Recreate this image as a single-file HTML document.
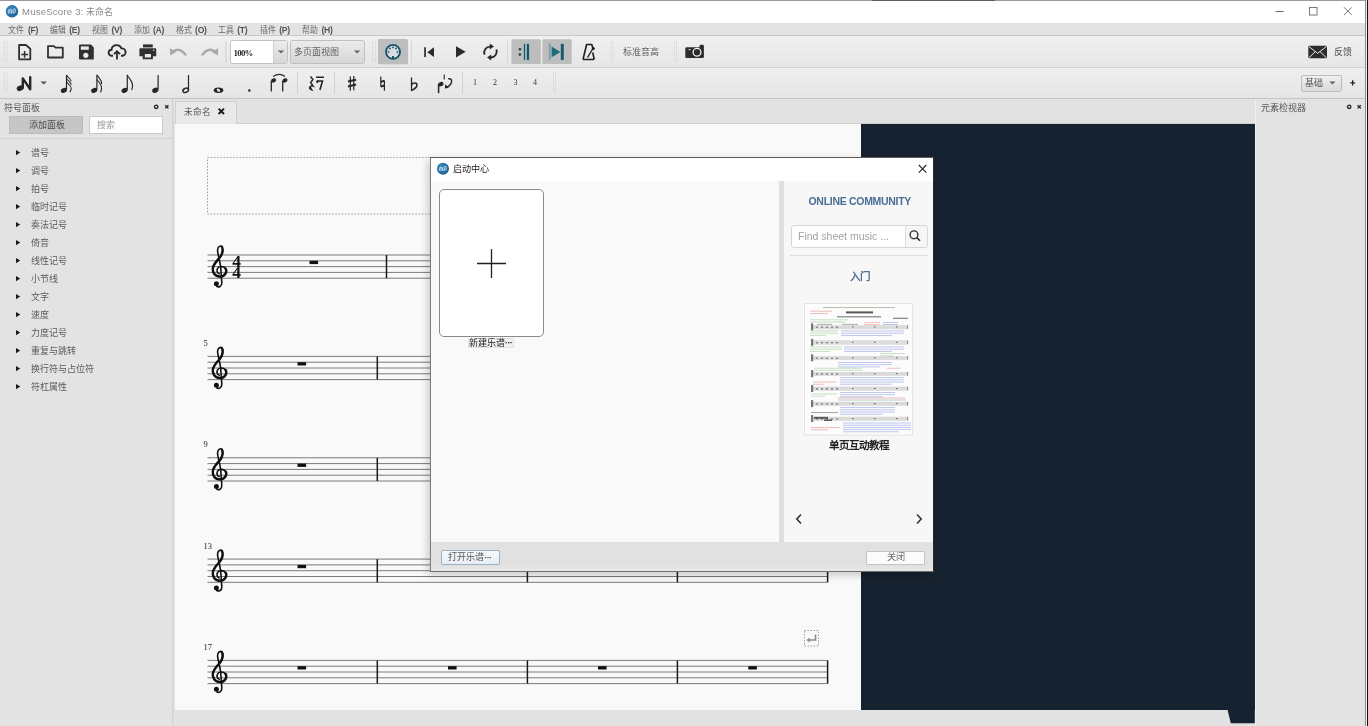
<!DOCTYPE html>
<html lang="zh-CN">
<head>
<meta charset="utf-8">
<style>
*{margin:0;padding:0;box-sizing:border-box}
html,body{width:1368px;height:726px;overflow:hidden;background:#e2e2e2;font-family:"Liberation Sans",sans-serif;}
.a{position:absolute}
.ser{font-family:"Liberation Serif",serif}
#title{left:0;top:0;width:1368px;height:23px;background:#fff;border-top:1px solid #9a9a9a}
#menu{left:0;top:23px;width:1368px;height:13px;background:#e3e3e3;border-bottom:1px solid #c9c9c9}
#tb1{left:0;top:36px;width:1368px;height:32px;background:linear-gradient(#f0f0f0,#e6e6e6);border-bottom:1px solid #cfcfcf}
#tb2{left:0;top:68px;width:1368px;height:31px;background:linear-gradient(#efefef,#e5e5e5);border-bottom:1px solid #c4c4c4}
#lpanel{left:0;top:99px;width:172px;height:627px;background:#e3e3e3}
#canvasL{left:172px;top:99px;width:3px;height:627px;background:linear-gradient(90deg,#cfcfcf,#dedede 60%,#e9e9e9)}
#tabbar{left:175px;top:99px;width:1080px;height:25px;background:#e2e2e2;border-bottom:1px solid #cfcfcf}
#page{left:175px;top:124px;width:686px;height:586px;background:#f9f9f9}
#dark{left:861px;top:124px;width:394px;height:586px;background:#16222f}
#rpanel{left:1255px;top:99px;width:110px;height:627px;background:#e3e3e3;border-left:1px solid #f0f0f0}
#redge{left:1365px;top:0;width:3px;height:726px;background:linear-gradient(90deg,#8c8c8c 0,#8c8c8c 1px,#f2f2f2 1px,#f2f2f2 2px,#111 2px)}
</style>
</head>
<body>
<div id="root" style="position:absolute;left:0;top:0;width:1368px;height:726px;overflow:hidden;will-change:transform">
<div id="title" class="a"></div>
<div id="menu" class="a"></div>
<div class="a" style="left:872px;top:0;width:123px;height:1px;background:#5a5f63"></div>
<div id="tb1" class="a"></div>
<div id="tb2" class="a"></div>
<div id="lpanel" class="a"></div>
<div id="canvasL" class="a"></div>
<div id="tabbar" class="a"></div>
<div id="page" class="a"></div>
<div id="dark" class="a"></div>
<svg class="a" style="left:0;top:0;will-change:transform" width="1368" height="726" viewBox="0 0 1368 726">
<rect x="207.5" y="157.5" width="620.5" height="56.5" fill="none" stroke="#a0a0a0" stroke-width="1" stroke-dasharray="1.6 1.6"/>
<path d="M207.5 255.0H827.6" stroke="#7a7a7a" stroke-width="1"/>
<path d="M207.5 260.8H827.6" stroke="#7a7a7a" stroke-width="1"/>
<path d="M207.5 266.6H827.6" stroke="#7a7a7a" stroke-width="1"/>
<path d="M207.5 272.4H827.6" stroke="#7a7a7a" stroke-width="1"/>
<path d="M207.5 278.2H827.6" stroke="#7a7a7a" stroke-width="1"/>
<g transform="translate(0 0.0)" fill="none" stroke="#111" stroke-linecap="round"><path d="M219.2 273.8C217 273.2 216.4 270.4 217.6 268.4C219 266 223.6 265.8 225.6 268.6C227.4 271.4 225.4 276.6 220 276.6C215 276.6 212.4 272.6 212.8 268.6C213.2 263.6 218.4 259.6 220.6 256.4C222.8 253.2 223.4 248.8 221.8 246.6C220.6 245.2 218 246.4 217.6 249.6C217.2 253 219.6 258 220.8 268L221.8 282.6C222 286.6 218.6 287.6 216.8 286.4" stroke-width="1.6"/><path d="M225.6 268.6C227.4 271.4 225.4 276.6 220 276.6C215 276.6 212.4 272.6 212.8 268.6C213.2 263.6 218.4 259.6 220.6 256.4C222.8 253.2 223.4 248.8 221.8 246.6" stroke-width="2.4"/><circle cx="216.4" cy="283.8" r="2.5" fill="#111" stroke="none"/></g>
<path d="M386.5 255.0V278.2" stroke="#1a1a1a" stroke-width="1.5"/>
<path d="M827.6 255.0V278.2" stroke="#1a1a1a" stroke-width="1.5"/>
<rect x="309.5" y="260.8" width="8.6" height="3.3" fill="#111"/>
<path d="M207.5 356.4H827.6" stroke="#7a7a7a" stroke-width="1"/>
<path d="M207.5 362.2H827.6" stroke="#7a7a7a" stroke-width="1"/>
<path d="M207.5 368.0H827.6" stroke="#7a7a7a" stroke-width="1"/>
<path d="M207.5 373.8H827.6" stroke="#7a7a7a" stroke-width="1"/>
<path d="M207.5 379.6H827.6" stroke="#7a7a7a" stroke-width="1"/>
<g transform="translate(0 101.4)" fill="none" stroke="#111" stroke-linecap="round"><path d="M219.2 273.8C217 273.2 216.4 270.4 217.6 268.4C219 266 223.6 265.8 225.6 268.6C227.4 271.4 225.4 276.6 220 276.6C215 276.6 212.4 272.6 212.8 268.6C213.2 263.6 218.4 259.6 220.6 256.4C222.8 253.2 223.4 248.8 221.8 246.6C220.6 245.2 218 246.4 217.6 249.6C217.2 253 219.6 258 220.8 268L221.8 282.6C222 286.6 218.6 287.6 216.8 286.4" stroke-width="1.6"/><path d="M225.6 268.6C227.4 271.4 225.4 276.6 220 276.6C215 276.6 212.4 272.6 212.8 268.6C213.2 263.6 218.4 259.6 220.6 256.4C222.8 253.2 223.4 248.8 221.8 246.6" stroke-width="2.4"/><circle cx="216.4" cy="283.8" r="2.5" fill="#111" stroke="none"/></g>
<path d="M377.3 356.4V379.6" stroke="#1a1a1a" stroke-width="1.5"/>
<path d="M527.4 356.4V379.6" stroke="#1a1a1a" stroke-width="1.5"/>
<path d="M677.4 356.4V379.6" stroke="#1a1a1a" stroke-width="1.5"/>
<path d="M827.6 356.4V379.6" stroke="#1a1a1a" stroke-width="1.5"/>
<rect x="297.5" y="362.2" width="8.6" height="3.3" fill="#111"/>
<rect x="448" y="362.2" width="8.6" height="3.3" fill="#111"/>
<rect x="598" y="362.2" width="8.6" height="3.3" fill="#111"/>
<rect x="748.3" y="362.2" width="8.6" height="3.3" fill="#111"/>
<text x="203.4" y="345.8" font-family="Liberation Serif" font-size="8.5" fill="#222">5</text>
<path d="M207.5 457.8H827.6" stroke="#7a7a7a" stroke-width="1"/>
<path d="M207.5 463.6H827.6" stroke="#7a7a7a" stroke-width="1"/>
<path d="M207.5 469.4H827.6" stroke="#7a7a7a" stroke-width="1"/>
<path d="M207.5 475.2H827.6" stroke="#7a7a7a" stroke-width="1"/>
<path d="M207.5 481.0H827.6" stroke="#7a7a7a" stroke-width="1"/>
<g transform="translate(0 202.8)" fill="none" stroke="#111" stroke-linecap="round"><path d="M219.2 273.8C217 273.2 216.4 270.4 217.6 268.4C219 266 223.6 265.8 225.6 268.6C227.4 271.4 225.4 276.6 220 276.6C215 276.6 212.4 272.6 212.8 268.6C213.2 263.6 218.4 259.6 220.6 256.4C222.8 253.2 223.4 248.8 221.8 246.6C220.6 245.2 218 246.4 217.6 249.6C217.2 253 219.6 258 220.8 268L221.8 282.6C222 286.6 218.6 287.6 216.8 286.4" stroke-width="1.6"/><path d="M225.6 268.6C227.4 271.4 225.4 276.6 220 276.6C215 276.6 212.4 272.6 212.8 268.6C213.2 263.6 218.4 259.6 220.6 256.4C222.8 253.2 223.4 248.8 221.8 246.6" stroke-width="2.4"/><circle cx="216.4" cy="283.8" r="2.5" fill="#111" stroke="none"/></g>
<path d="M377.3 457.8V481.0" stroke="#1a1a1a" stroke-width="1.5"/>
<path d="M527.4 457.8V481.0" stroke="#1a1a1a" stroke-width="1.5"/>
<path d="M677.4 457.8V481.0" stroke="#1a1a1a" stroke-width="1.5"/>
<path d="M827.6 457.8V481.0" stroke="#1a1a1a" stroke-width="1.5"/>
<rect x="297.5" y="463.6" width="8.6" height="3.3" fill="#111"/>
<rect x="448" y="463.6" width="8.6" height="3.3" fill="#111"/>
<rect x="598" y="463.6" width="8.6" height="3.3" fill="#111"/>
<rect x="748.3" y="463.6" width="8.6" height="3.3" fill="#111"/>
<text x="203.4" y="447.2" font-family="Liberation Serif" font-size="8.5" fill="#222">9</text>
<path d="M207.5 559.1H827.6" stroke="#7a7a7a" stroke-width="1"/>
<path d="M207.5 564.9H827.6" stroke="#7a7a7a" stroke-width="1"/>
<path d="M207.5 570.7H827.6" stroke="#7a7a7a" stroke-width="1"/>
<path d="M207.5 576.5H827.6" stroke="#7a7a7a" stroke-width="1"/>
<path d="M207.5 582.3H827.6" stroke="#7a7a7a" stroke-width="1"/>
<g transform="translate(0 304.1)" fill="none" stroke="#111" stroke-linecap="round"><path d="M219.2 273.8C217 273.2 216.4 270.4 217.6 268.4C219 266 223.6 265.8 225.6 268.6C227.4 271.4 225.4 276.6 220 276.6C215 276.6 212.4 272.6 212.8 268.6C213.2 263.6 218.4 259.6 220.6 256.4C222.8 253.2 223.4 248.8 221.8 246.6C220.6 245.2 218 246.4 217.6 249.6C217.2 253 219.6 258 220.8 268L221.8 282.6C222 286.6 218.6 287.6 216.8 286.4" stroke-width="1.6"/><path d="M225.6 268.6C227.4 271.4 225.4 276.6 220 276.6C215 276.6 212.4 272.6 212.8 268.6C213.2 263.6 218.4 259.6 220.6 256.4C222.8 253.2 223.4 248.8 221.8 246.6" stroke-width="2.4"/><circle cx="216.4" cy="283.8" r="2.5" fill="#111" stroke="none"/></g>
<path d="M377.3 559.1V582.3" stroke="#1a1a1a" stroke-width="1.5"/>
<path d="M527.4 559.1V582.3" stroke="#1a1a1a" stroke-width="1.5"/>
<path d="M677.4 559.1V582.3" stroke="#1a1a1a" stroke-width="1.5"/>
<path d="M827.6 559.1V582.3" stroke="#1a1a1a" stroke-width="1.5"/>
<rect x="297.5" y="564.9" width="8.6" height="3.3" fill="#111"/>
<rect x="448" y="564.9" width="8.6" height="3.3" fill="#111"/>
<rect x="598" y="564.9" width="8.6" height="3.3" fill="#111"/>
<rect x="748.3" y="564.9" width="8.6" height="3.3" fill="#111"/>
<text x="203.4" y="548.5" font-family="Liberation Serif" font-size="8.5" fill="#222">13</text>
<path d="M207.5 660.4H827.6" stroke="#7a7a7a" stroke-width="1"/>
<path d="M207.5 666.2H827.6" stroke="#7a7a7a" stroke-width="1"/>
<path d="M207.5 672.0H827.6" stroke="#7a7a7a" stroke-width="1"/>
<path d="M207.5 677.8H827.6" stroke="#7a7a7a" stroke-width="1"/>
<path d="M207.5 683.6H827.6" stroke="#7a7a7a" stroke-width="1"/>
<g transform="translate(0 405.4)" fill="none" stroke="#111" stroke-linecap="round"><path d="M219.2 273.8C217 273.2 216.4 270.4 217.6 268.4C219 266 223.6 265.8 225.6 268.6C227.4 271.4 225.4 276.6 220 276.6C215 276.6 212.4 272.6 212.8 268.6C213.2 263.6 218.4 259.6 220.6 256.4C222.8 253.2 223.4 248.8 221.8 246.6C220.6 245.2 218 246.4 217.6 249.6C217.2 253 219.6 258 220.8 268L221.8 282.6C222 286.6 218.6 287.6 216.8 286.4" stroke-width="1.6"/><path d="M225.6 268.6C227.4 271.4 225.4 276.6 220 276.6C215 276.6 212.4 272.6 212.8 268.6C213.2 263.6 218.4 259.6 220.6 256.4C222.8 253.2 223.4 248.8 221.8 246.6" stroke-width="2.4"/><circle cx="216.4" cy="283.8" r="2.5" fill="#111" stroke="none"/></g>
<path d="M377.3 660.4V683.6" stroke="#1a1a1a" stroke-width="1.5"/>
<path d="M527.4 660.4V683.6" stroke="#1a1a1a" stroke-width="1.5"/>
<path d="M677.4 660.4V683.6" stroke="#1a1a1a" stroke-width="1.5"/>
<path d="M827.6 660.4V683.6" stroke="#1a1a1a" stroke-width="1.5"/>
<rect x="297.5" y="666.2" width="8.6" height="3.3" fill="#111"/>
<rect x="448" y="666.2" width="8.6" height="3.3" fill="#111"/>
<rect x="598" y="666.2" width="8.6" height="3.3" fill="#111"/>
<rect x="748.3" y="666.2" width="8.6" height="3.3" fill="#111"/>
<text x="203.4" y="649.8" font-family="Liberation Serif" font-size="8.5" fill="#222">17</text>
<text x="232.2" y="266.8" font-family="Liberation Serif" font-weight="bold" font-size="17.5" fill="#111">4</text>
<text x="232.2" y="278.4" font-family="Liberation Serif" font-weight="bold" font-size="17.5" fill="#111">4</text>
<rect x="804.5" y="630.5" width="14" height="15.5" fill="none" stroke="#a0a0a0" stroke-width="1" stroke-dasharray="1.5 1.5"/>
<path d="M815.5 634.5v5.5h-7" fill="none" stroke="#8a8a8a" stroke-width="1.6"/><path d="M806.5 640l3.2-2.6v5.2z" fill="#8a8a8a"/>
</svg>
<svg class="a" style="left:1215px;top:700px" width="45" height="26"><path d="M0 9.8H12.5L15.8 23.3H39.8V0H0z" fill="#16222f"/></svg>
<div id="rpanel" class="a"></div>
<div id="redge" class="a"></div>

<svg class="a" style="left:0;top:0" width="1368" height="100" viewBox="0 0 1368 100">
 <!-- title logo -->
 <defs>
  <radialGradient id="lg" cx="0.4" cy="0.35" r="0.7"><stop offset="0" stop-color="#3d8ac4"/><stop offset="1" stop-color="#1d5e8f"/></radialGradient>
 </defs>
 <circle cx="12" cy="11.3" r="6.2" fill="url(#lg)"/>
 <path d="M8.3 13.6v-3.3c0-.9 1.6-.9 1.6 0v3.3M9.9 10.3c0-.9 1.6-.9 1.6 0v3.3M13.2 13.6v-3.8c0-1.4 2.2-1.4 2.2 0v1.8c0 1.4-2.2 1.4-2.2 0" stroke="#dfeefa" stroke-width="0.8" fill="none"/>
 <!-- window controls -->
 <path d="M1275.5 11.5h8.2" stroke="#666" stroke-width="1"/>
 <rect x="1309.5" y="7.5" width="7.5" height="7.5" fill="none" stroke="#777" stroke-width="1"/>
 <path d="M1344 7.3l7.8 7.8M1351.8 7.3l-7.8 7.8" stroke="#666" stroke-width="0.9"/>
 <!-- toolbar1 grip -->
 <path d="M4 41v22M7 41v22" stroke="#d0d0d0" stroke-width="1" stroke-dasharray="1 1"/>
 <!-- new file -->
 <path d="M19.1 45v14.3h11.2v-10.6l-4.4-3.7z" fill="none" stroke="#303030" stroke-width="1.8" stroke-linejoin="round"/>
 <path d="M21.2 54.4h6.9M24.6 51v6.8" stroke="#303030" stroke-width="1.5"/>
 <!-- folder -->
 <path d="M48 46.1h5.8l1.8 1.6h7.2v9.8h-14.8z" fill="none" stroke="#303030" stroke-width="1.8" stroke-linejoin="round"/>
 <!-- save -->
 <path d="M79 45.4q0-.8.8-.8h11.2l2.8 2.8v11.4q0 .8-.8.8h-13.2q-.8 0-.8-.8z" fill="#303030"/>
 <rect x="80.8" y="46.4" width="8" height="3.4" fill="#e8e8e8"/>
 <circle cx="85.8" cy="55.3" r="2.6" fill="#e8e8e8"/>
 <!-- cloud upload -->
 <path d="M113 55.8h-1.2a3 3 0 0 1-.3-6 5.2 5.2 0 0 1 10-1.4 3.6 3.6 0 0 1 .8 7.4h-1.3" fill="none" stroke="#2a2a2a" stroke-width="1.9"/>
 <path d="M117 59.6v-8.2M114 54.2l3-3 3 3" fill="none" stroke="#2a2a2a" stroke-width="1.8"/>
 <!-- print -->
 <rect x="143" y="44.4" width="9.8" height="3" fill="#303030"/>
 <path d="M140.3 48.3h15.1q.8 0 .8.8v7.2h-3.3v3h-10.2v-3h-3.3v-7.2q0-.8.9-.8z" fill="#303030"/>
 <rect x="144.8" y="54" width="6.2" height="3.5" fill="#e6e6e6"/>
 <circle cx="153.7" cy="50.3" r=".7" fill="#e6e6e6"/>
 <!-- undo/redo -->
 <path d="M173.5 51.2q6-4.4 12.6 4.2" fill="none" stroke="#a9a9a9" stroke-width="2.3"/>
 <path d="M169.8 48.3l.3 7.2 6.5-3.8z" fill="#a9a9a9"/>
 <path d="M214.4 51.2q-6-4.4-12.6 4.2" fill="none" stroke="#a9a9a9" stroke-width="2.3"/>
 <path d="M218.2 48.3l-.3 7.2-6.5-3.8z" fill="#a9a9a9"/>
 <path d="M226 41v22" stroke="#cfcfcf" stroke-width="1"/>
 <!-- zoom combo -->
 <rect x="230.5" y="40.5" width="57" height="23" rx="2" fill="#fff" stroke="#c2c2c2"/>
 <path d="M273.5 41v22" stroke="#cfcfcf"/>
 <rect x="274" y="41" width="13" height="22" fill="url(#cg)"/>
 <defs><linearGradient id="cg" x1="0" y1="0" x2="0" y2="1"><stop offset="0" stop-color="#ececec"/><stop offset="1" stop-color="#d6d6d6"/></linearGradient></defs>
 <path d="M277.8 50.4h6.4l-3.2 3.2z" fill="#666"/>
 <!-- view combo -->
 <rect x="290.5" y="40.5" width="74" height="23" rx="2" fill="url(#cg)" stroke="#c0c0c0"/>
 <path d="M353.9 50.4h6.4l-3.2 3.2z" fill="#666"/>
 <path d="M372.5 41v22M375.5 41v22" stroke="#cfcfcf" stroke-width="1" stroke-dasharray="1 1"/>
 <!-- midi button -->
 <rect x="378" y="39" width="30" height="25.3" rx="1.5" fill="#bdbdbd"/>
 <circle cx="393" cy="51.9" r="8.2" fill="none" stroke="#a9cfe0" stroke-width="0.8"/><circle cx="393" cy="51.9" r="7" fill="#d9dde3" stroke="#1d5464" stroke-width="1.9"/>
 <g fill="#1d5464"><circle cx="388.6" cy="51.9" r="0.9"/><circle cx="390" cy="48.5" r="0.9"/><circle cx="393" cy="47.4" r="0.9"/><circle cx="396" cy="48.5" r="0.9"/><circle cx="397.4" cy="51.9" r="0.9"/><rect x="392" y="56" width="2" height="2"/></g>
 <path d="M411.5 41v22" stroke="#d6d6d6"/>
 <!-- rewind -->
 <rect x="424.2" y="47.3" width="1.7" height="9.7" fill="#2a2a2a"/>
 <path d="M434 47.3v9.7l-6.7-4.85z" fill="#2a2a2a"/>
 <!-- play -->
 <path d="M456 46.2v11.3l9.7-5.65z" fill="#2a2a2a"/>
 <!-- loop -->
 <path d="M484.6 54.6A5.9 5.9 0 0 1 490.4 46.6M496.4 49.4A5.9 5.9 0 0 1 490.6 57.4" fill="none" stroke="#2a2a2a" stroke-width="1.9"/>
 <path d="M489.8 43.6l4.2 3-4.2 3zM491.2 54.4l-4.2 3 4.2 3z" fill="#2a2a2a"/>
 <path d="M507.5 41v22" stroke="#d6d6d6"/>
 <!-- repeat btn -->
 <rect x="511.4" y="39.2" width="29.4" height="24.9" rx="1.5" fill="#bdbdbd"/>
 <circle cx="519.9" cy="49.3" r="1.3" fill="#1e3f48"/><circle cx="519.9" cy="54.5" r="1.3" fill="#1e3f48"/>
 <rect x="523.6" y="43.6" width="1.8" height="16.5" fill="#1f5565" stroke="#a7cfe0" stroke-width=".5"/>
 <rect x="526.6" y="43.6" width="2.6" height="16.5" fill="#1f4e5c" stroke="#a7cfe0" stroke-width=".5"/>
 <!-- pan btn -->
 <rect x="542.4" y="39.2" width="29.3" height="24.9" rx="1.5" fill="#bdbdbd"/>
 <rect x="548.8" y="43.6" width="2" height="16.5" fill="#7f9fae"/>
 <path d="M551.6 46.5v10.8l8.9-5.4z" fill="#1f6b7a"/>
 <rect x="560.5" y="43.6" width="3.5" height="16.5" fill="#1f5565" stroke="#a7cfe0" stroke-width=".5"/>
 <!-- metronome -->
 <path d="M583 59.5l3.6-15h5.2l1.2 4.2M594 59.5h-11" fill="none" stroke="#1e1e1e" stroke-width="1.6" stroke-linejoin="round"/>
 <path d="M587.5 57.5l5.5-9" stroke="#1e1e1e" stroke-width="1.4"/>
 <circle cx="593.3" cy="48.6" r="1.5" fill="#1e1e1e"/>
 <path d="M592.8 52.5l1.4 7" stroke="#1e1e1e" stroke-width="1.6"/>
 <path d="M611 41v22M613 41v22" stroke="#d4d4d4" stroke-width="1" stroke-dasharray="1 1"/>
 <path d="M674.5 41v22M676.5 41v22" stroke="#d4d4d4" stroke-width="1" stroke-dasharray="1 1"/>
 <!-- camera -->
 <path d="M686.5 47.2h13v-1q0-1.4 1.4-1.4h1.6q1.4 0 1.4 1.4v10.6q0 1.2-1.2 1.2h-16.2q-1.2 0-1.2-1.2v-8.4q0-1.2 1.2-1.2z" fill="#2c2c2c"/>
 <circle cx="697" cy="52.2" r="3.9" fill="none" stroke="#f2f2f2" stroke-width="1.3"/>
 <rect x="688.6" y="49.2" width="2" height="1" fill="#f2f2f2"/>
 <!-- mail -->
 <rect x="1308.3" y="45.8" width="18.7" height="12.5" rx=".8" fill="#2c2c2c"/>
 <path d="M1308.6 46.3l9.05 7 9.05-7M1308.8 57.9l6.5-6.3M1326.5 57.9l-6.5-6.3" fill="none" stroke="#e8e8e8" stroke-width="1"/>
</svg>


<svg class="a" style="left:0;top:66px" width="1368" height="34" viewBox="0 66 1368 34">
 <g fill="#262626" stroke="#262626">
 <path d="M4 72v22M7 72v22" stroke="#cdcdcd" stroke-width="1" stroke-dasharray="1 1" fill="none"/>
 <!-- N icon -->
 <ellipse cx="20.2" cy="88.2" rx="3.6" ry="2.6" transform="rotate(-25 20.2 88.2)" stroke="none"/>
 <path d="M22.8 87.6V78.4l7.4 10.8V77.2" fill="none" stroke-width="2.4" stroke-linejoin="round" stroke-linecap="round"/>
 <path d="M40.4 81.4h6.6l-3.3 3z" stroke="none" fill="#555"/>
 <!-- 64th -->
 <ellipse cx="63.9" cy="90.3" rx="3.2" ry="2.3" transform="rotate(-25 63.9 90.3)" stroke="none"/>
 <path d="M66.5 89.6V75" stroke-width="1.2" fill="none"/>
 <path d="M66.6 75.4C68 77.6 71 78.6 71.2 81.4M66.6 78.7C68 80.9 71 81.9 71.2 84.7M66.6 82C68 84.2 71.4 85.4 71.2 88.4 71.1 90 70.4 91.4 69.9 92.3" stroke-width="1.05" fill="none"/>
 <!-- 32nd -->
 <ellipse cx="94.2" cy="90.3" rx="3.2" ry="2.3" transform="rotate(-25 94.2 90.3)" stroke="none"/>
 <path d="M96.9 89.6V74.8" stroke-width="1.2" fill="none"/>
 <path d="M97 75.1C98.6 77.8 101.8 79.6 101.7 83.9M97 79.5C98.6 82.2 101.9 84 101.6 88.4 101.4 90 100.9 91.4 100.6 92.3" stroke-width="1.1" fill="none"/>
 <!-- 8th -->
 <ellipse cx="124.6" cy="90.3" rx="3.2" ry="2.3" transform="rotate(-25 124.6 90.3)" stroke="none"/>
 <path d="M127.3 89.6V74.8" stroke-width="1.2" fill="none"/>
 <path d="M127.4 75.1C128.8 78.6 132.6 80.6 132.6 85.4 132.6 87.4 132 89 131.5 90" stroke-width="1.15" fill="none"/>
 <!-- quarter -->
 <ellipse cx="155.3" cy="90.3" rx="3.2" ry="2.4" transform="rotate(-25 155.3 90.3)" stroke="none"/>
 <path d="M158.1 89.5V75" stroke-width="1.2" fill="none"/>
 <!-- half -->
 <ellipse cx="185.7" cy="90.3" rx="2.9" ry="1.95" transform="rotate(-25 185.7 90.3)" stroke-width="1.5" fill="none"/>
 <path d="M188.5 89.5V75" stroke-width="1.2" fill="none"/>
 <!-- whole -->
 <ellipse cx="218.5" cy="90.2" rx="4.8" ry="2.8" stroke="none"/>
 <ellipse cx="218.5" cy="90.2" rx="1.9" ry="1.3" transform="rotate(40 218.5 90.2)" stroke="none" fill="#e6e6e6"/>
 <!-- dot -->
 <circle cx="249.3" cy="90.5" r="1.2" stroke="none"/>
 <!-- tie -->
 <path d="M273.2 76.5q6-4.2 11.8 0" stroke-width="1.1" fill="none"/>
 <ellipse cx="273.6" cy="80.4" rx="2.6" ry="2" transform="rotate(-25 273.6 80.4)" stroke="none"/>
 <path d="M271.3 80.8v10.8" stroke-width="1.3"/>
 <ellipse cx="285" cy="80.4" rx="2.6" ry="2" transform="rotate(-25 285 80.4)" stroke="none"/>
 <path d="M282.7 80.8v10.8" stroke-width="1.3"/>
 <path d="M297.5 72v22" stroke="#cfcfcf" stroke-width="1"/>
 <!-- rest tuplet -->
 <path d="M310.5 76.5l2.4 3-2.2 3 2.4 3.6q-2.4-.8-2.8 1.2l1.4 2.6q-3-1.2-1.8-3.4" stroke-width="1.5" fill="none"/>
 <path d="M316 77.2h8M317 81h5.5l-2.6 9" stroke-width="1.6" fill="none"/>
 <circle cx="317.3" cy="81.8" r="1.3" stroke="none"/>
 <path d="M334.5 72v22" stroke="#cfcfcf" stroke-width="1"/>
 <!-- sharp -->
 <path d="M350.3 76.5v14.3M353.8 76v14.3" stroke-width="1.2" fill="none"/>
 <path d="M348 81.6l8.1-1.8M348 86.4l8.1-1.8" stroke-width="2" fill="none"/>
 <!-- natural -->
 <path d="M380.8 76.6v10.2M384.4 80.6v10.2" stroke-width="1.2" fill="none"/>
 <path d="M380.8 81.9l3.6-1.1M380.8 86.6l3.6-1.1" stroke-width="2" fill="none"/>
 <!-- flat -->
 <path d="M411.5 77.5v13.3" stroke-width="1.3" fill="none"/>
 <path d="M411.5 90.6q5.6-3 5.4-5.4.1-2.6-2.6-2.2-1.6.2-2.8 1.6" stroke-width="1.6" fill="none"/>
 <!-- flip -->
 <ellipse cx="440.8" cy="84.2" rx="2.8" ry="2.1" transform="rotate(-25 440.8 84.2)" stroke="none"/>
 <path d="M438.6 84.6v8.6" stroke-width="1.5"/>
 <path d="M444.2 74.4v5" stroke-width="1.1"/>
 <path d="M448.2 78.8q3.6-.6 3.4 2.6-.2 3.4-4.4 5.6" stroke-width="1.4" fill="none"/>
 <path d="M445.2 84.2l-.4 4.4 4.2-.8z" stroke="none"/>
 <path d="M462.5 72v22" stroke="#cfcfcf" stroke-width="1"/>
 <path d="M553.5 72v22M555.5 72v22" stroke="#d0d0d0" stroke-width="1" stroke-dasharray="1 1" fill="none"/>
 <!-- plus -->
 <path d="M1350.2 82.9h4.9M1352.65 80.3v5.2" stroke-width="1.3" fill="none"/>
 </g>
</svg>


<div class="a" style="left:22px;top:5.8px;font-size:9.6px;color:#8c8c8c;white-space:nowrap;line-height:12px"><span style="letter-spacing:0.2px">MuseScore 3:</span> <span style="font-size:9px;letter-spacing:0px">未命名</span></div>
<div id="menutxt" class="a" style="left:0;top:23px;height:13px;width:400px;color:#6a6a6a;white-space:nowrap"><span class="a" style="left:8.4px;top:1.5px;font-size:7.9px;line-height:10px;transform:scaleY(1.1);transform-origin:0 0">文件</span><span class="a" style="left:27.9px;top:1.8px;font-size:8.6px;line-height:10px;letter-spacing:-0.3px;font-weight:bold;color:#555">(F)</span><span class="a" style="left:49.7px;top:1.5px;font-size:7.9px;line-height:10px;transform:scaleY(1.1);transform-origin:0 0">编辑</span><span class="a" style="left:69.2px;top:1.8px;font-size:8.6px;line-height:10px;letter-spacing:-0.3px;font-weight:bold;color:#555">(E)</span><span class="a" style="left:91.9px;top:1.5px;font-size:7.9px;line-height:10px;transform:scaleY(1.1);transform-origin:0 0">视图</span><span class="a" style="left:111.4px;top:1.8px;font-size:8.6px;line-height:10px;letter-spacing:-0.3px;font-weight:bold;color:#555">(V)</span><span class="a" style="left:133.5px;top:1.5px;font-size:7.9px;line-height:10px;transform:scaleY(1.1);transform-origin:0 0">添加</span><span class="a" style="left:153.0px;top:1.8px;font-size:8.6px;line-height:10px;letter-spacing:-0.3px;font-weight:bold;color:#555">(A)</span><span class="a" style="left:175.6px;top:1.5px;font-size:7.9px;line-height:10px;transform:scaleY(1.1);transform-origin:0 0">格式</span><span class="a" style="left:195.1px;top:1.8px;font-size:8.6px;line-height:10px;letter-spacing:-0.3px;font-weight:bold;color:#555">(O)</span><span class="a" style="left:217.7px;top:1.5px;font-size:7.9px;line-height:10px;transform:scaleY(1.1);transform-origin:0 0">工具</span><span class="a" style="left:237.2px;top:1.8px;font-size:8.6px;line-height:10px;letter-spacing:-0.3px;font-weight:bold;color:#555">(T)</span><span class="a" style="left:259.8px;top:1.5px;font-size:7.9px;line-height:10px;transform:scaleY(1.1);transform-origin:0 0">插件</span><span class="a" style="left:279.3px;top:1.8px;font-size:8.6px;line-height:10px;letter-spacing:-0.3px;font-weight:bold;color:#555">(P)</span><span class="a" style="left:302px;top:1.5px;font-size:7.9px;line-height:10px;transform:scaleY(1.1);transform-origin:0 0">帮助</span><span class="a" style="left:321.5px;top:1.8px;font-size:8.6px;line-height:10px;letter-spacing:-0.3px;font-weight:bold;color:#555">(H)</span></div>
<div class="a ser" style="left:233.5px;top:46.5px;font-size:8.8px;line-height:12px;color:#2a2a2a;font-weight:bold;letter-spacing:-0.7px">100%</div>
<div class="a ser" style="left:294px;top:46px;font-size:9px;line-height:12px;color:#606060;white-space:nowrap">多页面视图</div>
<div class="a ser" style="left:623px;top:45.5px;font-size:9px;line-height:12px;color:#606060;white-space:nowrap">标准音高</div>
<div class="a ser" style="left:1334px;top:45.5px;font-size:9px;line-height:12px;color:#505050;white-space:nowrap">反馈</div>
<div class="a" style="left:473px;top:77px;font-size:8px;line-height:12px;color:#333;font-family:'Liberation Serif',serif;white-space:nowrap"><span class="a" style="left:0">1</span><span class="a" style="left:20px">2</span><span class="a" style="left:40.5px">3</span><span class="a" style="left:60px">4</span></div>
<div class="a" style="left:1301px;top:75px;width:40.5px;height:16.5px;border:1px solid #bdbdbd;border-radius:2px;background:linear-gradient(#f0f0f0,#d9d9d9)"></div>
<div class="a ser" style="left:1305px;top:77px;font-size:9px;line-height:12px;color:#555;white-space:nowrap">基础</div>
<svg class="a" style="left:1328px;top:80px" width="10" height="6"><path d="M1.2 1.4h6.4l-3.2 3z" fill="#666"/></svg>


<!-- left palette -->
<div class="a ser" style="left:3.5px;top:101.5px;font-size:9px;line-height:12px;color:#555;white-space:nowrap">符号面板</div>
<svg class="a" style="left:150px;top:101px" width="22" height="12"><g stroke="#222" fill="none"><circle cx="6.2" cy="5.8" r="1.7" stroke-width="1.3"/><path d="M15.2 4.2l3.2 3.2M18.4 4.2l-3.2 3.2" stroke-width="1.3"/></g></svg>
<div class="a" style="left:9px;top:115.5px;width:74px;height:18px;background:#c6c6c6;border:1px solid #bcbcbc"></div>
<div class="a ser" style="left:28.5px;top:118.5px;font-size:9px;line-height:12px;color:#4a4a4a;white-space:nowrap">添加面板</div>
<div class="a" style="left:89px;top:115.5px;width:74px;height:18px;background:#fff;border:1px solid #c9c9c9"></div>
<div class="a ser" style="left:97px;top:118.5px;font-size:9px;line-height:12px;color:#9a9a9a;white-space:nowrap">搜索</div>
<div class="a" style="left:0;top:138px;width:172px;height:1px;background:#d2d2d2"></div>
<div class="a" style="left:0;top:146px;height:12px;width:170px"><svg class="a" style="left:15px;top:2.8px" width="6" height="7"><path d="M1 1L5.2 3.6 1 6.2z" fill="#1a1a1a"/></svg><span class="a ser" style="left:30.5px;top:0.7px;font-size:9px;line-height:12px;color:#5a5a5a;white-space:nowrap">谱号</span></div><div class="a" style="left:0;top:164px;height:12px;width:170px"><svg class="a" style="left:15px;top:2.8px" width="6" height="7"><path d="M1 1L5.2 3.6 1 6.2z" fill="#1a1a1a"/></svg><span class="a ser" style="left:30.5px;top:0.7px;font-size:9px;line-height:12px;color:#5a5a5a;white-space:nowrap">调号</span></div><div class="a" style="left:0;top:182px;height:12px;width:170px"><svg class="a" style="left:15px;top:2.8px" width="6" height="7"><path d="M1 1L5.2 3.6 1 6.2z" fill="#1a1a1a"/></svg><span class="a ser" style="left:30.5px;top:0.7px;font-size:9px;line-height:12px;color:#5a5a5a;white-space:nowrap">拍号</span></div><div class="a" style="left:0;top:200px;height:12px;width:170px"><svg class="a" style="left:15px;top:2.8px" width="6" height="7"><path d="M1 1L5.2 3.6 1 6.2z" fill="#1a1a1a"/></svg><span class="a ser" style="left:30.5px;top:0.7px;font-size:9px;line-height:12px;color:#5a5a5a;white-space:nowrap">临时记号</span></div><div class="a" style="left:0;top:218px;height:12px;width:170px"><svg class="a" style="left:15px;top:2.8px" width="6" height="7"><path d="M1 1L5.2 3.6 1 6.2z" fill="#1a1a1a"/></svg><span class="a ser" style="left:30.5px;top:0.7px;font-size:9px;line-height:12px;color:#5a5a5a;white-space:nowrap">奏法记号</span></div><div class="a" style="left:0;top:236px;height:12px;width:170px"><svg class="a" style="left:15px;top:2.8px" width="6" height="7"><path d="M1 1L5.2 3.6 1 6.2z" fill="#1a1a1a"/></svg><span class="a ser" style="left:30.5px;top:0.7px;font-size:9px;line-height:12px;color:#5a5a5a;white-space:nowrap">倚音</span></div><div class="a" style="left:0;top:254px;height:12px;width:170px"><svg class="a" style="left:15px;top:2.8px" width="6" height="7"><path d="M1 1L5.2 3.6 1 6.2z" fill="#1a1a1a"/></svg><span class="a ser" style="left:30.5px;top:0.7px;font-size:9px;line-height:12px;color:#5a5a5a;white-space:nowrap">线性记号</span></div><div class="a" style="left:0;top:272px;height:12px;width:170px"><svg class="a" style="left:15px;top:2.8px" width="6" height="7"><path d="M1 1L5.2 3.6 1 6.2z" fill="#1a1a1a"/></svg><span class="a ser" style="left:30.5px;top:0.7px;font-size:9px;line-height:12px;color:#5a5a5a;white-space:nowrap">小节线</span></div><div class="a" style="left:0;top:290px;height:12px;width:170px"><svg class="a" style="left:15px;top:2.8px" width="6" height="7"><path d="M1 1L5.2 3.6 1 6.2z" fill="#1a1a1a"/></svg><span class="a ser" style="left:30.5px;top:0.7px;font-size:9px;line-height:12px;color:#5a5a5a;white-space:nowrap">文字</span></div><div class="a" style="left:0;top:308px;height:12px;width:170px"><svg class="a" style="left:15px;top:2.8px" width="6" height="7"><path d="M1 1L5.2 3.6 1 6.2z" fill="#1a1a1a"/></svg><span class="a ser" style="left:30.5px;top:0.7px;font-size:9px;line-height:12px;color:#5a5a5a;white-space:nowrap">速度</span></div><div class="a" style="left:0;top:326px;height:12px;width:170px"><svg class="a" style="left:15px;top:2.8px" width="6" height="7"><path d="M1 1L5.2 3.6 1 6.2z" fill="#1a1a1a"/></svg><span class="a ser" style="left:30.5px;top:0.7px;font-size:9px;line-height:12px;color:#5a5a5a;white-space:nowrap">力度记号</span></div><div class="a" style="left:0;top:344px;height:12px;width:170px"><svg class="a" style="left:15px;top:2.8px" width="6" height="7"><path d="M1 1L5.2 3.6 1 6.2z" fill="#1a1a1a"/></svg><span class="a ser" style="left:30.5px;top:0.7px;font-size:9px;line-height:12px;color:#5a5a5a;white-space:nowrap">重复与跳转</span></div><div class="a" style="left:0;top:362px;height:12px;width:170px"><svg class="a" style="left:15px;top:2.8px" width="6" height="7"><path d="M1 1L5.2 3.6 1 6.2z" fill="#1a1a1a"/></svg><span class="a ser" style="left:30.5px;top:0.7px;font-size:9px;line-height:12px;color:#5a5a5a;white-space:nowrap">换行符与占位符</span></div><div class="a" style="left:0;top:380px;height:12px;width:170px"><svg class="a" style="left:15px;top:2.8px" width="6" height="7"><path d="M1 1L5.2 3.6 1 6.2z" fill="#1a1a1a"/></svg><span class="a ser" style="left:30.5px;top:0.7px;font-size:9px;line-height:12px;color:#5a5a5a;white-space:nowrap">符杠属性</span></div>
<!-- tab -->
<div class="a" style="left:175px;top:101px;width:62px;height:23px;background:#e9e9e9;border:1px solid #d0d0d0;border-bottom:none"></div>
<div class="a ser" style="left:184px;top:106px;font-size:8.6px;letter-spacing:0.2px;line-height:12px;color:#555;white-space:nowrap">未命名</div>
<svg class="a" style="left:216.5px;top:107px" width="10" height="10"><path d="M1.6 1.6l5.4 5.4M7 1.6L1.6 7" stroke="#1a1a1a" stroke-width="1.9"/></svg>
<!-- right panel -->
<div class="a ser" style="left:1260.5px;top:101.5px;font-size:9px;line-height:12px;color:#555;white-space:nowrap">元素检视器</div>
<svg class="a" style="left:1343px;top:101px" width="22" height="12"><g stroke="#222" fill="none"><circle cx="6.2" cy="5.8" r="1.7" stroke-width="1.3"/><path d="M14.6 4.2l3.2 3.2M17.8 4.2l-3.2 3.2" stroke-width="1.3"/></g></svg>


<!-- dialog -->
<div class="a" style="left:430px;top:157px;width:504px;height:415px;box-shadow:-2px 3px 8px rgba(0,0,0,0.2);background:#f9f9f9;border:1px solid #7c7c7c;border-top-color:#5c5c5c;border-right-color:#2a2a2a;border-bottom-color:#6e6e6e"></div>
<div class="a" style="left:431px;top:158px;width:502px;height:23px;background:#fff"></div>
<svg class="a" style="left:436px;top:162px" width="14" height="14" viewBox="436 162 14 14"><circle cx="443" cy="168.8" r="6" fill="url(#lg)"/><path d="M439.6 171v-3.1c0-.8 1.4-.8 1.4 0v3.1M441 167.9c0-.8 1.4-.8 1.4 0v3.1M444.2 171v-3.6c0-1.3 2-1.3 2 0v1.7c0 1.3-2 1.3-2 0" stroke="#e6f2fb" stroke-width="0.75" fill="none"/></svg>
<div class="a" style="left:453px;top:163.2px;font-size:9.1px;line-height:12px;color:#222;white-space:nowrap">启动中心</div>
<svg class="a" style="left:917px;top:163px" width="12" height="12"><path d="M1.8 2l7.6 7.6M9.4 2L1.8 9.6" stroke="#222" stroke-width="1.1"/></svg>
<!-- left content -->
<div class="a" style="left:438.5px;top:189px;width:105px;height:148px;background:#fff;border:1px solid #8a8a8a;border-radius:5px"></div>
<svg class="a" style="left:476px;top:248px" width="32" height="32"><path d="M1 15.5h29M15.5 1v29" stroke="#222" stroke-width="1.3"/></svg>
<div class="a" style="left:468px;top:337.5px;width:46px;height:10px;background:#f0f0f0;border:1px solid #e2e2e2"></div>
<div class="a" style="left:469px;top:336.5px;font-size:9px;line-height:12px;color:#222;white-space:nowrap">新建乐谱<span style="letter-spacing:-0.6px;font-weight:bold">···</span></div>
<!-- splitter & right -->
<div class="a" style="left:779px;top:181px;width:5px;height:361px;background:#dedede"></div>
<div class="a" style="left:784px;top:181px;width:149px;height:361px;background:#f7f7f7"></div>
<div class="a" style="left:808.5px;top:194.5px;font-size:10.5px;line-height:12px;color:#4a6f96;font-weight:bold;white-space:nowrap;letter-spacing:-0.3px">ONLINE COMMUNITY</div>
<div class="a" style="left:790.5px;top:224.5px;width:137px;height:23px;background:#fff;border:1px solid #d6d6d6;border-radius:3px"></div>
<div class="a" style="left:904.5px;top:225.5px;width:22px;height:21px;background:#f6f6f6;border-left:1px solid #dcdcdc;border-radius:0 2px 2px 0"></div>
<svg class="a" style="left:907px;top:228px" width="16" height="16"><circle cx="7" cy="6.8" r="3.9" fill="none" stroke="#333" stroke-width="1.4"/><path d="M9.8 9.6l3.2 3.2" stroke="#333" stroke-width="1.6"/></svg>
<div class="a" style="left:798px;top:229.5px;font-size:10.5px;line-height:12px;color:#a2a2a2;white-space:nowrap">Find sheet music ...</div>
<div class="a" style="left:790px;top:255px;width:138px;height:1px;background:#dedede"></div>
<div class="a" style="left:849.5px;top:270px;font-size:10.5px;line-height:12px;color:#4e6f8f;font-weight:bold;white-space:nowrap">入门</div>
<svg class="a" style="left:804px;top:303px" width="110" height="134" viewBox="804 303 110 134">
<rect x="804.5" y="303.5" width="108" height="131.5" fill="#fcfcfc" stroke="#e4e4e4"/>
<rect x="823" y="307.15" width="72" height="0.9" fill="#9aa88a" opacity="0.8"/>
<rect x="810" y="310.75" width="22" height="0.9" fill="#e07a7a" opacity="0.55"/>
<rect x="810" y="313.15" width="18" height="0.9" fill="#e07a7a" opacity="0.55"/>
<rect x="846" y="311.40" width="27" height="2" fill="#222" opacity="0.75"/>
<rect x="837" y="316.25" width="44" height="1.1" fill="#555" opacity="0.8"/>
<rect x="893" y="317.75" width="15" height="1.1" fill="#555" opacity="0.8"/>
<rect x="810" y="319.35" width="38" height="0.9" fill="#8cc48c" opacity="0.55"/>
<rect x="810" y="321.55" width="36" height="0.9" fill="#8cc48c" opacity="0.55"/>
<rect x="817" y="323.90" width="15" height="0.8" fill="#555" opacity="0.6"/>
<rect x="842" y="323.90" width="16" height="0.8" fill="#555" opacity="0.6"/>
<rect x="864" y="322.10" width="16" height="0.8" fill="#e07a7a" opacity="0.55"/>
<rect x="883" y="322.05" width="15" height="0.9" fill="#7f8fe0" opacity="0.55"/>
<rect x="864" y="324.10" width="16" height="0.8" fill="#e07a7a" opacity="0.55"/>
<rect x="883" y="324.05" width="15" height="0.9" fill="#7f8fe0" opacity="0.55"/>
<rect x="811" y="325.2" width="97" height="3.6" fill="#eeeeee"/>
<rect x="811" y="325.20" width="97" height="0.35" fill="#bcbcbc"/>
<rect x="811" y="326.10" width="97" height="0.35" fill="#bcbcbc"/>
<rect x="811" y="327.00" width="97" height="0.35" fill="#bcbcbc"/>
<rect x="811" y="327.90" width="97" height="0.35" fill="#bcbcbc"/>
<rect x="811" y="328.80" width="97" height="0.35" fill="#bcbcbc"/>
<rect x="811" y="323.4" width="2.2" height="7" fill="#777"/>
<circle cx="817" cy="327.3" r="0.8" fill="#555"/>
<circle cx="822" cy="327.3" r="0.8" fill="#555"/>
<circle cx="827" cy="327.3" r="0.8" fill="#555"/>
<circle cx="832" cy="327.3" r="0.8" fill="#555"/>
<circle cx="837" cy="327.3" r="0.8" fill="#555"/>
<rect x="852" y="326.4" width="1.4" height="1" fill="#555"/>
<rect x="874" y="326.4" width="1.4" height="1" fill="#555"/>
<rect x="896" y="326.4" width="1.4" height="1" fill="#555"/>
<rect x="907.5" y="325.2" width="0.6" height="3.6" fill="#444"/>
<rect x="811" y="340.6" width="97" height="3.6" fill="#eeeeee"/>
<rect x="811" y="340.60" width="97" height="0.35" fill="#bcbcbc"/>
<rect x="811" y="341.50" width="97" height="0.35" fill="#bcbcbc"/>
<rect x="811" y="342.40" width="97" height="0.35" fill="#bcbcbc"/>
<rect x="811" y="343.30" width="97" height="0.35" fill="#bcbcbc"/>
<rect x="811" y="344.20" width="97" height="0.35" fill="#bcbcbc"/>
<rect x="811" y="338.8" width="2.2" height="7" fill="#777"/>
<circle cx="817" cy="342.7" r="0.8" fill="#555"/>
<circle cx="822" cy="342.7" r="0.8" fill="#555"/>
<circle cx="827" cy="342.7" r="0.8" fill="#555"/>
<circle cx="832" cy="342.7" r="0.8" fill="#555"/>
<circle cx="837" cy="342.7" r="0.8" fill="#555"/>
<rect x="852" y="341.8" width="1.4" height="1" fill="#555"/>
<rect x="874" y="341.8" width="1.4" height="1" fill="#555"/>
<rect x="896" y="341.8" width="1.4" height="1" fill="#555"/>
<rect x="907.5" y="340.6" width="0.6" height="3.6" fill="#444"/>
<rect x="811" y="356.1" width="97" height="3.6" fill="#eeeeee"/>
<rect x="811" y="356.10" width="97" height="0.35" fill="#bcbcbc"/>
<rect x="811" y="357.00" width="97" height="0.35" fill="#bcbcbc"/>
<rect x="811" y="357.90" width="97" height="0.35" fill="#bcbcbc"/>
<rect x="811" y="358.80" width="97" height="0.35" fill="#bcbcbc"/>
<rect x="811" y="359.70" width="97" height="0.35" fill="#bcbcbc"/>
<rect x="811" y="354.3" width="2.2" height="7" fill="#777"/>
<circle cx="817" cy="358.2" r="0.8" fill="#555"/>
<circle cx="822" cy="358.2" r="0.8" fill="#555"/>
<circle cx="827" cy="358.2" r="0.8" fill="#555"/>
<circle cx="832" cy="358.2" r="0.8" fill="#555"/>
<circle cx="837" cy="358.2" r="0.8" fill="#555"/>
<rect x="852" y="357.3" width="1.4" height="1" fill="#555"/>
<rect x="874" y="357.3" width="1.4" height="1" fill="#555"/>
<rect x="896" y="357.3" width="1.4" height="1" fill="#555"/>
<rect x="907.5" y="356.1" width="0.6" height="3.6" fill="#444"/>
<rect x="811" y="372.0" width="97" height="3.6" fill="#eeeeee"/>
<rect x="811" y="372.00" width="97" height="0.35" fill="#bcbcbc"/>
<rect x="811" y="372.90" width="97" height="0.35" fill="#bcbcbc"/>
<rect x="811" y="373.80" width="97" height="0.35" fill="#bcbcbc"/>
<rect x="811" y="374.70" width="97" height="0.35" fill="#bcbcbc"/>
<rect x="811" y="375.60" width="97" height="0.35" fill="#bcbcbc"/>
<rect x="811" y="370.2" width="2.2" height="7" fill="#777"/>
<circle cx="817" cy="374.1" r="0.8" fill="#555"/>
<circle cx="822" cy="374.1" r="0.8" fill="#555"/>
<circle cx="827" cy="374.1" r="0.8" fill="#555"/>
<circle cx="832" cy="374.1" r="0.8" fill="#555"/>
<circle cx="837" cy="374.1" r="0.8" fill="#555"/>
<rect x="852" y="373.2" width="1.4" height="1" fill="#555"/>
<rect x="874" y="373.2" width="1.4" height="1" fill="#555"/>
<rect x="896" y="373.2" width="1.4" height="1" fill="#555"/>
<rect x="907.5" y="372.0" width="0.6" height="3.6" fill="#444"/>
<rect x="811" y="386.8" width="97" height="3.6" fill="#eeeeee"/>
<rect x="811" y="386.80" width="97" height="0.35" fill="#bcbcbc"/>
<rect x="811" y="387.70" width="97" height="0.35" fill="#bcbcbc"/>
<rect x="811" y="388.60" width="97" height="0.35" fill="#bcbcbc"/>
<rect x="811" y="389.50" width="97" height="0.35" fill="#bcbcbc"/>
<rect x="811" y="390.40" width="97" height="0.35" fill="#bcbcbc"/>
<rect x="811" y="385.0" width="2.2" height="7" fill="#777"/>
<circle cx="817" cy="388.9" r="0.8" fill="#555"/>
<circle cx="822" cy="388.9" r="0.8" fill="#555"/>
<circle cx="827" cy="388.9" r="0.8" fill="#555"/>
<circle cx="832" cy="388.9" r="0.8" fill="#555"/>
<circle cx="837" cy="388.9" r="0.8" fill="#555"/>
<rect x="852" y="388.0" width="1.4" height="1" fill="#555"/>
<rect x="874" y="388.0" width="1.4" height="1" fill="#555"/>
<rect x="896" y="388.0" width="1.4" height="1" fill="#555"/>
<rect x="907.5" y="386.8" width="0.6" height="3.6" fill="#444"/>
<rect x="811" y="401.9" width="97" height="3.6" fill="#eeeeee"/>
<rect x="811" y="401.90" width="97" height="0.35" fill="#bcbcbc"/>
<rect x="811" y="402.80" width="97" height="0.35" fill="#bcbcbc"/>
<rect x="811" y="403.70" width="97" height="0.35" fill="#bcbcbc"/>
<rect x="811" y="404.60" width="97" height="0.35" fill="#bcbcbc"/>
<rect x="811" y="405.50" width="97" height="0.35" fill="#bcbcbc"/>
<rect x="811" y="400.1" width="2.2" height="7" fill="#777"/>
<circle cx="817" cy="404.0" r="0.8" fill="#555"/>
<circle cx="822" cy="404.0" r="0.8" fill="#555"/>
<circle cx="827" cy="404.0" r="0.8" fill="#555"/>
<circle cx="832" cy="404.0" r="0.8" fill="#555"/>
<circle cx="837" cy="404.0" r="0.8" fill="#555"/>
<rect x="852" y="403.1" width="1.4" height="1" fill="#555"/>
<rect x="874" y="403.1" width="1.4" height="1" fill="#555"/>
<rect x="896" y="403.1" width="1.4" height="1" fill="#555"/>
<rect x="907.5" y="401.9" width="0.6" height="3.6" fill="#444"/>
<rect x="811" y="416.9" width="97" height="3.6" fill="#eeeeee"/>
<rect x="811" y="416.90" width="97" height="0.35" fill="#bcbcbc"/>
<rect x="811" y="417.80" width="97" height="0.35" fill="#bcbcbc"/>
<rect x="811" y="418.70" width="97" height="0.35" fill="#bcbcbc"/>
<rect x="811" y="419.60" width="97" height="0.35" fill="#bcbcbc"/>
<rect x="811" y="420.50" width="97" height="0.35" fill="#bcbcbc"/>
<rect x="811" y="415.1" width="2.2" height="7" fill="#777"/>
<circle cx="817" cy="419.0" r="0.8" fill="#555"/>
<circle cx="822" cy="419.0" r="0.8" fill="#555"/>
<circle cx="827" cy="419.0" r="0.8" fill="#555"/>
<circle cx="832" cy="419.0" r="0.8" fill="#555"/>
<circle cx="837" cy="419.0" r="0.8" fill="#555"/>
<rect x="852" y="418.1" width="1.4" height="1" fill="#555"/>
<rect x="874" y="418.1" width="1.4" height="1" fill="#555"/>
<rect x="896" y="418.1" width="1.4" height="1" fill="#555"/>
<rect x="907.5" y="416.9" width="0.6" height="3.6" fill="#444"/>
<rect x="841" y="330.55" width="63" height="0.9" fill="#7f8fe0" opacity="0.55"/>
<rect x="841" y="332.75" width="63" height="0.9" fill="#7f8fe0" opacity="0.55"/>
<rect x="841" y="334.95" width="51" height="0.9" fill="#7f8fe0" opacity="0.55"/>
<rect x="810" y="330.55" width="28" height="0.9" fill="#8cc48c" opacity="0.55"/>
<rect x="810" y="332.75" width="28" height="0.9" fill="#8cc48c" opacity="0.55"/>
<rect x="810" y="334.95" width="16" height="0.9" fill="#8cc48c" opacity="0.55"/>
<rect x="844" y="346.55" width="60" height="0.9" fill="#7f8fe0" opacity="0.55"/>
<rect x="844" y="348.75" width="60" height="0.9" fill="#7f8fe0" opacity="0.55"/>
<rect x="844" y="350.95" width="48" height="0.9" fill="#7f8fe0" opacity="0.55"/>
<rect x="810" y="346.55" width="32" height="0.9" fill="#8cc48c" opacity="0.55"/>
<rect x="810" y="348.75" width="32" height="0.9" fill="#8cc48c" opacity="0.55"/>
<rect x="810" y="350.95" width="20" height="0.9" fill="#8cc48c" opacity="0.55"/>
<rect x="880" y="353.15" width="25" height="0.9" fill="#8cc48c" opacity="0.55"/>
<rect x="880" y="355.35" width="13" height="0.9" fill="#8cc48c" opacity="0.55"/>
<rect x="838" y="362.05" width="54" height="0.9" fill="#7f8fe0" opacity="0.55"/>
<rect x="838" y="364.25" width="54" height="0.9" fill="#7f8fe0" opacity="0.55"/>
<rect x="838" y="366.45" width="42" height="0.9" fill="#7f8fe0" opacity="0.55"/>
<rect x="814" y="367.75" width="48" height="0.9" fill="#8cc48c" opacity="0.55"/>
<rect x="887" y="367.75" width="13" height="0.9" fill="#e07a7a" opacity="0.55"/>
<rect x="814" y="369.75" width="48" height="0.9" fill="#8cc48c" opacity="0.55"/>
<rect x="840" y="377.15" width="64" height="0.9" fill="#7f8fe0" opacity="0.55"/>
<rect x="840" y="379.35" width="64" height="0.9" fill="#7f8fe0" opacity="0.55"/>
<rect x="840" y="381.55" width="64" height="0.9" fill="#7f8fe0" opacity="0.55"/>
<rect x="840" y="383.75" width="52" height="0.9" fill="#7f8fe0" opacity="0.55"/>
<rect x="813" y="381.55" width="23" height="0.9" fill="#e07a7a" opacity="0.55"/>
<rect x="813" y="383.75" width="11" height="0.9" fill="#e07a7a" opacity="0.55"/>
<rect x="811" y="393.55" width="26" height="0.9" fill="#8cc48c" opacity="0.55"/>
<rect x="811" y="395.75" width="14" height="0.9" fill="#8cc48c" opacity="0.55"/>
<rect x="840" y="392.05" width="55" height="0.9" fill="#7f8fe0" opacity="0.55"/>
<rect x="840" y="394.25" width="55" height="0.9" fill="#7f8fe0" opacity="0.55"/>
<rect x="840" y="396.45" width="43" height="0.9" fill="#7f8fe0" opacity="0.55"/>
<rect x="838" y="397.55" width="67" height="0.9" fill="#e07a7a" opacity="0.55"/>
<rect x="838" y="399.55" width="68" height="0.9" fill="#7a9a9a" opacity="0.55"/>
<rect x="840" y="407.15" width="55" height="0.9" fill="#7f8fe0" opacity="0.55"/>
<rect x="840" y="409.35" width="55" height="0.9" fill="#7f8fe0" opacity="0.55"/>
<rect x="840" y="411.55" width="55" height="0.9" fill="#7f8fe0" opacity="0.55"/>
<rect x="840" y="413.75" width="43" height="0.9" fill="#7f8fe0" opacity="0.55"/>
<rect x="811" y="412.15" width="27" height="0.9" fill="#555" opacity="0.6"/>
<rect x="843" y="422.55" width="68" height="0.9" fill="#7f8fe0" opacity="0.55"/>
<rect x="843" y="424.75" width="68" height="0.9" fill="#7f8fe0" opacity="0.55"/>
<rect x="843" y="426.95" width="68" height="0.9" fill="#7f8fe0" opacity="0.55"/>
<rect x="843" y="429.15" width="68" height="0.9" fill="#7f8fe0" opacity="0.55"/>
<rect x="843" y="431.35" width="56" height="0.9" fill="#7f8fe0" opacity="0.55"/>
<rect x="811" y="427.15" width="29" height="0.9" fill="#e07a7a" opacity="0.55"/>
<rect x="811" y="429.35" width="17" height="0.9" fill="#e07a7a" opacity="0.55"/>
<rect x="814" y="416.8" width="14" height="2" fill="#222" opacity="0.7"/><rect x="824" y="419.5" width="8" height="1.5" fill="#222" opacity="0.7"/>
</svg>
<div class="a" style="left:829px;top:439px;font-size:10.5px;line-height:12px;color:#222;white-space:nowrap;font-weight:bold">单页互动教程</div>
<svg class="a" style="left:794px;top:512px" width="10" height="14"><path d="M7 2.5L2.8 7 7 11.5" fill="none" stroke="#333" stroke-width="1.6"/></svg>
<svg class="a" style="left:914px;top:512px" width="10" height="14"><path d="M3 2.5L7.2 7 3 11.5" fill="none" stroke="#333" stroke-width="1.6"/></svg>
<!-- footer -->
<div class="a" style="left:431px;top:542px;width:502px;height:29px;background:linear-gradient(#e1e1e1 0,#e1e1e1 80%,#e8e8e8 100%)"></div>
<div class="a" style="left:440.5px;top:550px;width:59px;height:14.5px;background:linear-gradient(#f6f9fc,#e7eef5);border:1px solid #9fb0bf;border-radius:2px"></div>
<div class="a ser" style="left:448px;top:551px;font-size:9.1px;line-height:12px;color:#555;white-space:nowrap">打开乐谱<span style="letter-spacing:-0.6px;font-weight:bold">···</span></div>
<div class="a" style="left:865.5px;top:550.5px;width:59px;height:14px;background:#fbfbfb;border:1px solid #c4c4c4;border-radius:1px"></div>
<div class="a ser" style="left:886.5px;top:551px;font-size:9.2px;line-height:12px;color:#6a6a6a;white-space:nowrap">关闭</div>

</div>
</body>
</html>
